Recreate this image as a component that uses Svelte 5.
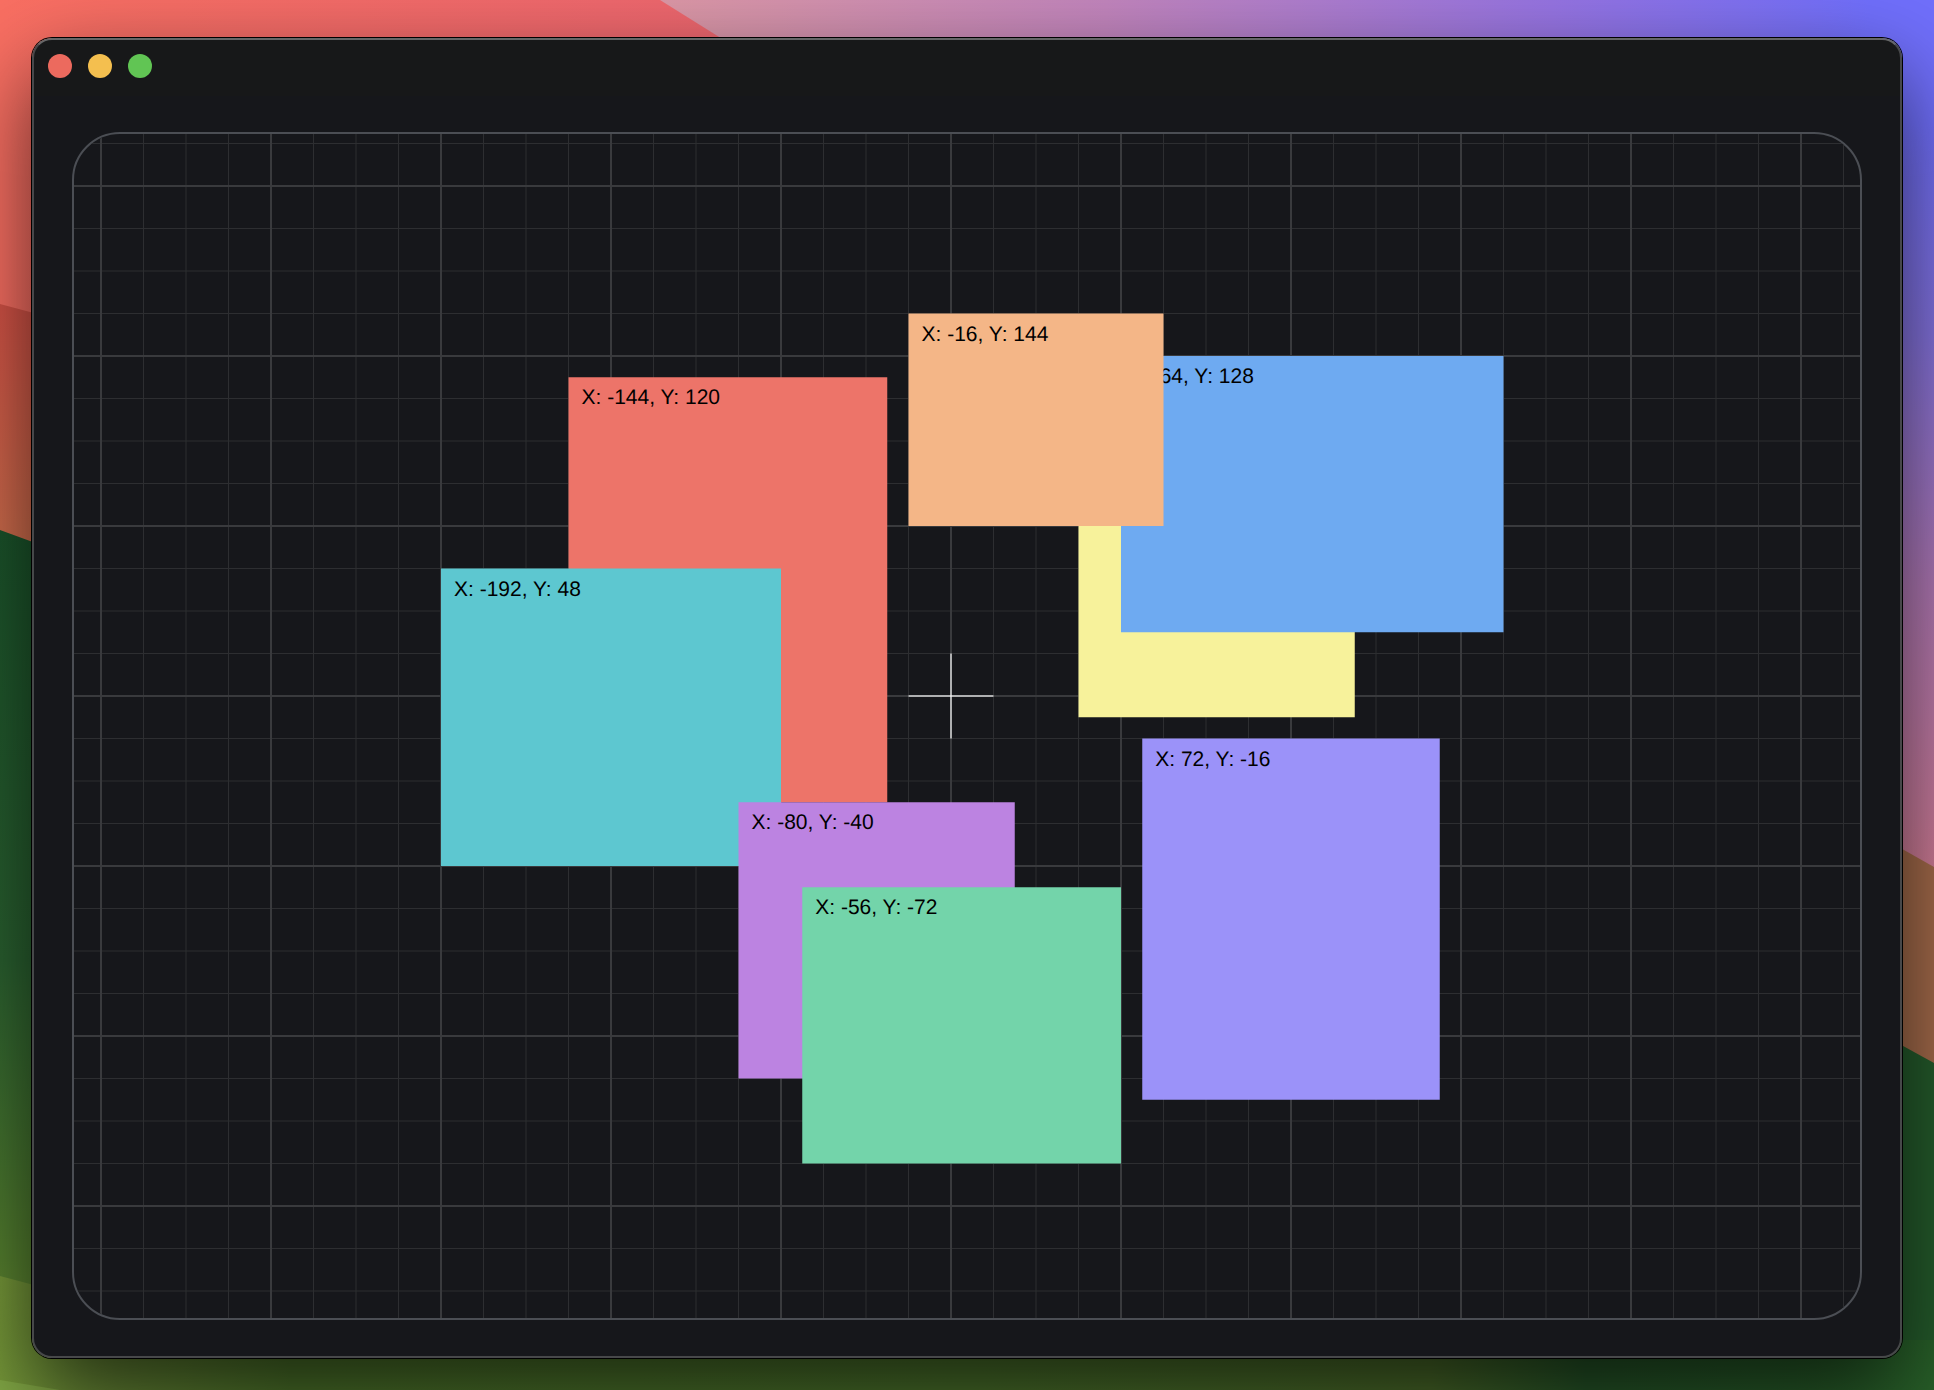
<script lang="ts">
  // Canvas units to pixels
  const UNIT = 2.65625;
  const STEP = 16;
  const MAJOR = 4;

  const range = Array.from({ length: 81 }, (_, i) => i - 40);
  const minor = range.filter((n) => n % MAJOR !== 0).map((n) => n * STEP * UNIT);
  const major = range.filter((n) => n % MAJOR === 0).map((n) => n * STEP * UNIT);

  const boxes = [
    { x: -144, y: 120, w: 120, h: 160, fill: '#ed7469' },
    { x: -192, y: 48, w: 128, h: 112, fill: '#5dc7d0' },
    { x: 48, y: 96, w: 104, h: 104, fill: '#f7f29b' },
    { x: -80, y: -40, w: 104, h: 104, fill: '#bc83e1' },
    { x: -56, y: -72, w: 120, h: 104, fill: '#73d4aa' },
    { x: 64, y: 128, w: 144, h: 104, fill: '#6eaaf1' },
    { x: -16, y: 144, w: 96, h: 80, fill: '#f4b687' },
    { x: 72, y: -16, w: 112, h: 136, fill: '#9b92f9' }
  ];
</script>

<div class="desktop">
  <svg class="wallpaper" viewBox="0 0 1934 1390" preserveAspectRatio="none" aria-hidden="true">
    <defs>
      <linearGradient id="sky" gradientUnits="userSpaceOnUse" x1="660" y1="0" x2="1934" y2="0">
        <stop offset="0" stop-color="#dc98a6" />
        <stop offset="0.35" stop-color="#c285bd" />
        <stop offset="0.7" stop-color="#9674e2" />
        <stop offset="0.95" stop-color="#706ffb" />
      </linearGradient>
      <linearGradient id="dusk" x1="0" y1="0" x2="0" y2="1">
        <stop offset="0.1" stop-color="#706ffb" />
        <stop offset="0.35" stop-color="#8372dd" />
        <stop offset="0.65" stop-color="#b078b4" />
        <stop offset="1" stop-color="#d07c94" />
      </linearGradient>
      <linearGradient id="coral" x1="0" y1="0" x2="1" y2="0">
        <stop offset="0" stop-color="#f96f62" />
        <stop offset="1" stop-color="#ec6670" />
      </linearGradient>
      <linearGradient id="rust" x1="0" y1="0" x2="0" y2="1">
        <stop offset="0" stop-color="#d65347" />
        <stop offset="1" stop-color="#d0754f" />
      </linearGradient>
      <linearGradient id="forest" x1="0" y1="0" x2="0" y2="1">
        <stop offset="0" stop-color="#1b542b" />
        <stop offset="0.5" stop-color="#2a6130" />
        <stop offset="0.85" stop-color="#56812f" />
        <stop offset="1" stop-color="#709238" />
      </linearGradient>
      <linearGradient id="meadow" x1="0" y1="0" x2="1" y2="0">
        <stop offset="0" stop-color="#769839" />
        <stop offset="0.06" stop-color="#668735" />
        <stop offset="0.15" stop-color="#4d752a" />
        <stop offset="0.5" stop-color="#4b732b" />
        <stop offset="0.74" stop-color="#4a6b29" />
        <stop offset="0.82" stop-color="#265628" />
        <stop offset="1" stop-color="#286029" />
      </linearGradient>
    </defs>
    <rect width="1934" height="1390" fill="url(#sky)" />
    <path d="M1880 40H1934V880H1880Z" fill="url(#dusk)" />
    <path d="M0 0H660L780 75V400H0Z" fill="url(#coral)" />
    <path d="M0 304L60 320V600H0Z" fill="url(#rust)" />
    <path d="M1874 833L1934 867V1100H1874Z" fill="#a36a4a" />
    <path d="M0 530L60 552V1390H0Z" fill="url(#forest)" />
    <path d="M1874 1030L1934 1063V1390H1874Z" fill="#245a2b" />
    <path d="M0 1276L240 1340H1934V1390H0Z" fill="url(#meadow)" />
    <path d="M0 1380L60 1390H0Z" fill="#82a845" />
  </svg>

  <main class="window">
    <header class="titlebar">
      <button class="light close" aria-label="Close"></button>
      <button class="light minimize" aria-label="Minimize"></button>
      <button class="light zoom" aria-label="Zoom"></button>
    </header>

    <section class="board" aria-label="Canvas">
      <svg class="plane" width="1" height="1">
        <g class="minor">
          {#each minor as p}
            <path d="M{p} -1700V1700M-1700 {p}H1700" />
          {/each}
        </g>
        <g class="major">
          {#each major as p}
            <path d="M{p} -1700V1700M-1700 {p}H1700" />
          {/each}
        </g>
        <path class="cross" d="M0 {-STEP * UNIT}V{STEP * UNIT}" />
        <path class="cross" d="M{-STEP * UNIT} 0H{STEP * UNIT}" />
        {#each boxes as b}
          <g transform="translate({b.x * UNIT} {-b.y * UNIT})">
            <rect width={b.w * UNIT} height={b.h * UNIT} fill={b.fill} />
            <text x="13" y="27">X: {b.x}, Y: {b.y}</text>
          </g>
        {/each}
      </svg>
    </section>
  </main>
</div>

<style>
  :global(body) {
    background: #22562a;
  }
  .desktop {
    position: relative;
    box-sizing: border-box;
    display: flex;
    min-height: 100vh;
    padding: 38px 32px 32px;
    overflow: hidden;
  }
  .wallpaper {
    position: absolute;
    inset: 0;
    width: 100%;
    height: 100%;
  }
  .window {
    position: relative;
    box-sizing: border-box;
    flex: 1;
    display: flex;
    flex-direction: column;
    padding: 0 38px 36px;
    border: 2px solid #47484a;
    border-top-color: #656667;
    border-radius: 20px;
    background: linear-gradient(#171819 56px, #16171b 56px);
    box-shadow:
      0 0 0 1px #000,
      0 36px 88px rgba(0, 0, 0, 0.66);
  }
  .titlebar {
    display: flex;
    gap: 16px;
    height: 24px;
    padding: 14px 0 54px;
    margin-left: -24px;
  }
  .light {
    width: 24px;
    height: 24px;
    padding: 0;
    border: 0;
    border-radius: 50%;
  }
  .close {
    background: #ec6a5e;
  }
  .minimize {
    background: #f4bf4f;
  }
  .zoom {
    background: #61c554;
  }
  .board {
    position: relative;
    flex: 1;
    border: 2px solid #4b4e54;
    border-radius: 48px;
    overflow: hidden;
  }
  .plane {
    position: absolute;
    left: calc(50% - 16px);
    top: calc(50% - 30px);
    overflow: visible;
    font-family: 'Liberation Sans', Arial, sans-serif;
    font-size: 21px;
    text-rendering: geometricPrecision;
  }
  .plane path {
    fill: none;
  }
  .minor {
    stroke: #2d2e31;
    stroke-width: 1;
  }
  .major {
    stroke: #393a3d;
    stroke-width: 2;
  }
  .cross {
    stroke: #fff;
    stroke-opacity: 0.6;
    stroke-width: 2;
  }
</style>
